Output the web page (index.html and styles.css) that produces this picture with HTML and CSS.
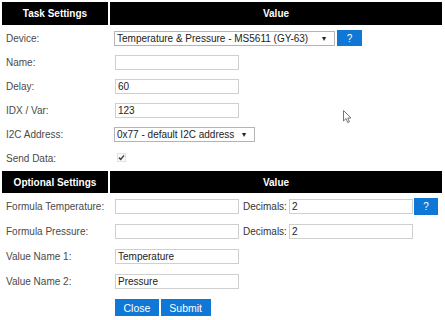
FILE: index.html
```html
<!DOCTYPE html>
<html>
<head>
<meta charset="utf-8">
<link rel="stylesheet" href="styles.css">
</head>
<body>
<div class="form">
  <div class="hd">Task Settings</div><div class="hd">Value</div>

  <div class="lbl">Device:</div>
  <div class="val"><span class="sel sel-dev"><span class="sel-txt">Temperature &amp; Pressure - MS5611 (GY-63)</span><span class="arr">&#9662;</span></span><span class="btn qbtn">?</span></div>

  <div class="lbl">Name:</div>
  <div class="val"><span class="inp"></span></div>

  <div class="lbl">Delay:</div>
  <div class="val"><span class="inp">60</span></div>

  <div class="lbl">IDX / Var:</div>
  <div class="val"><span class="inp">123</span></div>

  <div class="lbl">I2C Address:</div>
  <div class="val"><span class="sel sel-i2c"><span class="sel-txt">0x77 - default I2C address</span><span class="arr">&#9662;</span></span></div>

  <div class="lbl">Send Data:</div>
  <div class="val"><span class="chk"><svg width="7" height="7" viewBox="0 0 7 7"><path d="M1 3.6 L2.8 5.4 L6 1.4" fill="none" stroke="#444" stroke-width="1.5"/></svg></span></div>

  <div class="hd">Optional Settings</div><div class="hd">Value</div>

  <div class="lbl">Formula Temperature:</div>
  <div class="val"><span class="inp"></span><span class="dec">Decimals:</span><span class="inp">2</span><span class="btn qbtn2">?</span></div>

  <div class="lbl">Formula Pressure:</div>
  <div class="val"><span class="inp"></span><span class="dec">Decimals:</span><span class="inp">2</span></div>

  <div class="lbl">Value Name 1:</div>
  <div class="val"><span class="inp">Temperature</span></div>

  <div class="lbl">Value Name 2:</div>
  <div class="val"><span class="inp">Pressure</span></div>

  <div class="lbl"></div>
  <div class="val"><span class="btn act">Close</span><span class="btn act">Submit</span></div>
</div>
<svg class="cursor" width="10" height="14" viewBox="0 0 10 14"><path d="M0.5 0.5 L0.5 11 L3 8.6 L4.8 12.6 L6.4 11.9 L4.7 8 L8 8 Z" fill="#fff" stroke="#777" stroke-width="1"/></svg>
</body>
</html>
```

FILE: styles.css
```css
html, body {
  margin: 0;
  padding: 0;
  background: #fff;
}
body {
  position: relative;
  width: 445px;
  height: 320px;
  overflow: hidden;
  font-family: "Liberation Sans", Arial, sans-serif;
  font-size: 10px;
  color: #444;
}
.form {
  display: grid;
  grid-template-columns: 106px 332px;
  grid-template-rows: 23px repeat(6, 22px) 22px repeat(4, 23px) 25px;
  column-gap: 2px;
  row-gap: 2px;
  padding: 2px;
}
.hd {
  background: #000;
  color: #fff;
  font-weight: bold;
  display: flex;
  align-items: center;
  justify-content: center;
}
.lbl {
  display: flex;
  align-items: center;
  padding-left: 4px;
  color: #4a4a4a;
}
.val {
  display: flex;
  align-items: center;
  padding-left: 5px;
}
.inp {
  box-sizing: border-box;
  width: 124px;
  height: 15px;
  border: 1px solid #cfcfcf;
  background: #fff;
  color: #222;
  padding-left: 2px;
  line-height: 13px;
  flex: none;
}
.sel {
  box-sizing: border-box;
  height: 15px;
  border: 1px solid #b4b4b4;
  background: #fff;
  color: #222;
  display: flex;
  align-items: center;
  padding-left: 2px;
  margin-left: -1px;
  flex: none;
}
.sel-dev { width: 221px; }
.sel-i2c { width: 141px; }
.sel-txt { flex: 1; white-space: nowrap; }
.arr {
  font-size: 8px;
  color: #222;
  width: 12px;
  text-align: left;
}
.btn {
  display: inline-flex;
  align-items: center;
  justify-content: center;
  background: #0f78d6;
  color: #fff;
  box-sizing: border-box;
  flex: none;
}
.qbtn {
  width: 25px;
  height: 16px;
  margin-left: 2px;
}
.qbtn2 {
  width: 24px;
  height: 17px;
  margin-left: 1px;
}
.dec {
  margin: 0 2px 0 4px;
  color: #333;
}
.chk {
  box-sizing: border-box;
  width: 9px;
  height: 9px;
  margin-left: 2px;
  margin-top: -1px;
  border: 1px solid #e2e2e2;
  background: #fafafa;
  display: flex;
  align-items: center;
  justify-content: center;
}
.act {
  height: 17px;
  padding: 0 8.5px;
  margin-right: 2px;
  font-size: 10.5px;
}
.cursor {
  position: absolute;
  left: 343px;
  top: 110px;
}
```
